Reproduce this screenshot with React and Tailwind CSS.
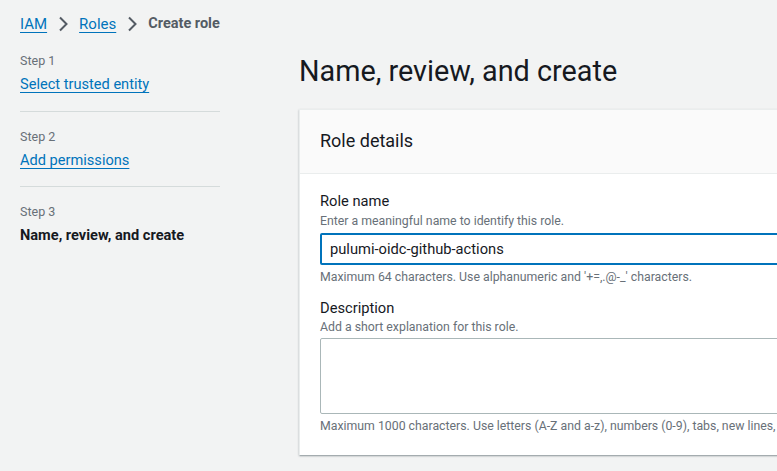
import React from "react";

function Chevron() {
  return (
    <svg width="10" height="16" viewBox="0 0 10 16" className="mx-[11px] shrink-0">
      <path d="M2 1.5 L8.5 8 L2 14.5" fill="none" stroke="#545b64" strokeWidth="2" strokeLinejoin="miter" />
    </svg>
  );
}

export default function App() {
  return (
    <div
      className="w-[777px] h-[471px] overflow-hidden bg-[#f2f3f3] text-[#16191f] relative"
      style={{ fontFamily: 'Roboto, "Open Sans", Arial, sans-serif' }}
    >
      <div className="flex items-center pl-[20px] pt-[14px] h-[20px] box-content leading-[20px] text-[15px]">
        <a className="text-[#0073bb] underline underline-offset-[3px] decoration-1">IAM</a>
        <Chevron />
        <a className="text-[#0073bb] underline underline-offset-[3px] decoration-1">Roles</a>
        <Chevron />
        <span className="font-bold text-[#545b64] text-[14.5px]">Create role</span>
      </div>
      <div className="flex">
        <div className="w-[200px] ml-[20px] mt-[18px] shrink-0">
          <div className="pb-[17px] border-b border-[#d5dbdb]">
            <div className="text-[12.5px] text-[#687078] leading-[18px]">Step 1</div>
            <a className="block mt-[4px] text-[14.6px] text-[#0073bb] underline underline-offset-[3px] leading-[20px]">Select trusted entity</a>
          </div>
          <div className="pt-[16px] pb-[16px] border-b border-[#d5dbdb]">
            <div className="text-[12.5px] text-[#687078] leading-[18px]">Step 2</div>
            <a className="block mt-[4px] text-[14.6px] text-[#0073bb] underline underline-offset-[3px] leading-[20px]">Add permissions</a>
          </div>
          <div className="pt-[16px]">
            <div className="text-[12.5px] text-[#687078] leading-[18px]">Step 3</div>
            <div className="mt-[4px] text-[14.6px] font-bold leading-[20px]">Name, review, and create</div>
          </div>
        </div>
        <div className="ml-[79px] flex-1 min-w-0">
          <h1 className="text-[28.8px] leading-[36px] mt-[19px] font-normal">Name, review, and create</h1>
          <div className="mt-[20px] w-[520px] bg-white shadow-[0_1px_2px_rgba(0,28,36,0.3),1px_1px_1px_rgba(0,28,36,0.15)] border-t border-l border-[#eaeded]">
            <div className="h-[64px] flex items-center px-[20px] bg-[#fafafa] border-b border-[#eaeded]">
              <h2 className="text-[18px] leading-[24px] pb-[2px]">Role details</h2>
            </div>
            <div className="px-[20px] pt-[17px] pb-[20px]">
              <div className="text-[14.7px] leading-[20px]">Role name</div>
              <div className="text-[12.3px] text-[#687078] leading-[18px] mt-[1px]">Enter a meaningful name to identify this role.</div>
              <div className="mt-[3px] h-[32px] border-2 border-[#0073bb] rounded-[2px] flex items-center px-[8px] text-[14.7px] whitespace-nowrap">
                pulumi-oidc-github-actions
              </div>
              <div className="text-[12.3px] text-[#687078] leading-[18px] mt-[3px] whitespace-nowrap">Maximum 64 characters. Use alphanumeric and '+=,.@-_' characters.</div>
              <div className="text-[14.7px] leading-[20px] mt-[12px]">Description</div>
              <div className="text-[12.3px] text-[#687078] leading-[18px] mt-[0px]">Add a short explanation for this role.</div>
              <div className="mt-[2px] h-[76px] border border-[#aab7b8] rounded-[2px]"></div>
              <div className="text-[12.3px] text-[#687078] leading-[18px] mt-[3px] whitespace-nowrap overflow-hidden">Maximum 1000 characters. Use letters (A-Z and a-z), numbers (0-9), tabs, new lines, or any of the following characters.</div>
            </div>
          </div>
        </div>
      </div>
    </div>
  );
}
